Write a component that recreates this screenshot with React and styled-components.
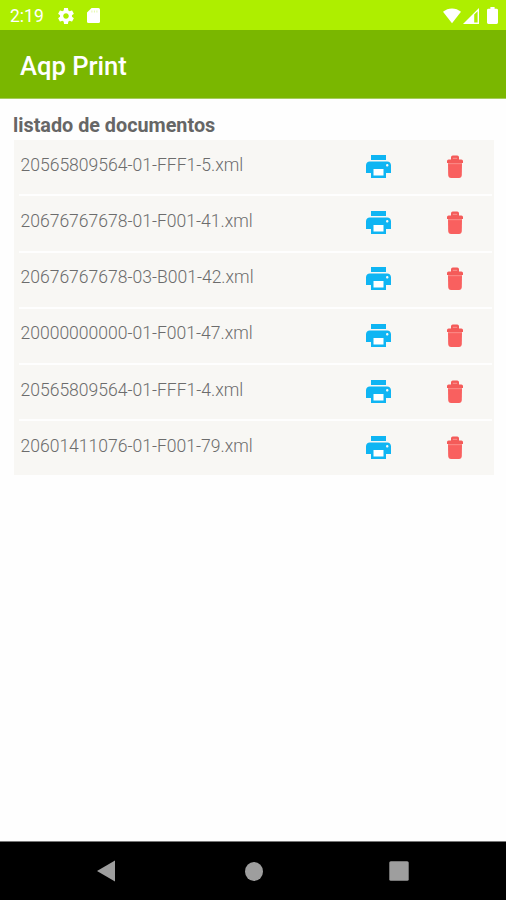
import React from 'react';
import styled, { createGlobalStyle } from 'styled-components';

const documents = [
  '20565809564-01-FFF1-5.xml',
  '20676767678-01-F001-41.xml',
  '20676767678-03-B001-42.xml',
  '20000000000-01-F001-47.xml',
  '20565809564-01-FFF1-4.xml',
  '20601411076-01-F001-79.xml',
];

const GearIcon = () => (
  <svg width="16" height="16" viewBox="2 2 20 20" fill="currentColor">
    <path d="M19.43 12.98c.04-.32.07-.64.07-.98s-.03-.66-.07-.98l2.11-1.65c.19-.15.24-.42.12-.64l-2-3.46c-.12-.22-.39-.3-.61-.22l-2.49 1c-.52-.4-1.08-.73-1.69-.98l-.38-2.65C14.46 2.18 14.25 2 14 2h-4c-.25 0-.46.18-.49.42l-.38 2.65c-.61.25-1.17.59-1.69.98l-2.49-1c-.23-.09-.49 0-.61.22l-2 3.46c-.13.22-.07.49.12.64l2.11 1.65c-.04.32-.07.65-.07.98s.03.66.07.98l-2.11 1.65c-.19.15-.24.42-.12.64l2 3.46c.12.22.39.3.61.22l2.49-1c.52.4 1.08.73 1.69.98l.38 2.65c.03.24.24.42.49.42h4c.25 0 .46-.18.49-.42l.38-2.65c.61-.25 1.17-.59 1.69-.98l2.49 1c.23.09.49 0 .61-.22l2-3.46c.12-.22.07-.49-.12-.64l-2.11-1.65zM12 15.5c-1.93 0-3.5-1.57-3.5-3.5s1.57-3.5 3.5-3.5 3.5 1.57 3.5 3.5-1.57 3.5-3.5 3.5z" />
  </svg>
);

const CardIcon = () => (
  <svg width="13" height="15" viewBox="0 0 13 15" fill="currentColor">
    <path d="M4.6 0H11.5Q13 0 13 1.5V13.5Q13 15 11.5 15H1.5Q0 15 0 13.5V4.6Z" />
    <path fill="#aeee00" opacity=".35" d="M4.4 2.4H5.4V4.6H4.4ZM6.9 2.4H7.9V4.6H6.9ZM9.4 2.4H10.4V4.6H9.4Z" />
  </svg>
);

const WifiIcon = () => (
  <svg width="18" height="16" viewBox="0 0 19 16" fill="currentColor">
    <path d="M0 3.6C5.4-1.2 13.6-1.2 19 3.6L9.5 15.6Z" />
  </svg>
);

const SignalIcon = () => (
  <svg width="16" height="16" viewBox="0 0 16 16" fill="currentColor">
    <path d="M0 16L16 0V16ZM11.2 6.6V14.6H14.6V3.2Z" fillRule="evenodd" />
  </svg>
);

const BatteryIcon = () => (
  <svg width="11" height="17" viewBox="0 0 11 17" fill="currentColor">
    <path d="M3.4 0H7.6V1.8H9.6Q11 1.8 11 3.2V15.6Q11 17 9.6 17H1.4Q0 17 0 15.6V3.2Q0 1.8 1.4 1.8H3.4Z" />
  </svg>
);

const PrintIcon = () => (
  <svg width="25" height="23" viewBox="2 3 20 18" preserveAspectRatio="none">
    <path fill="#fff" d="M7 13h10v7H7z" />
    <path
      fill="#0fb5f3"
      d="M19 8H5c-1.66 0-3 1.34-3 3v6h4v4h12v-4h4v-6c0-1.66-1.34-3-3-3zm-3 11H8v-5h8v5zm3-7c-.55 0-1-.45-1-1s.45-1 1-1 1 .45 1 1-.45 1-1 1zm-1-9H6v4h12V3z"
    />
  </svg>
);

const TrashIcon = () => (
  <svg width="16" height="23" viewBox="0 0 16 23">
    <path fill="#f9605f" d="M1 8.4H15L14.8 20Q14.6 23 12 23H4Q1.4 23 1.2 20Z" />
    <path fill="#fb8582" d="M1 7.8H15V9.2H1Z" />
    <path
      fill="#f45b59"
      d="M4 4.4V2.2Q4 .4 5.8 .4H10.2Q12 .4 12 2.2V4.4H14.4Q16 4.4 16 6V8H0V6Q0 4.4 1.6 4.4Z"
    />
    <path fill="#fa8f8c" d="M5.8 2.8H10.2V3.9H5.8Z" />
  </svg>
);

const App = () => {
  return (
    <Screen>
      <GlobalStyle />
      <StatusBar>
        <Clock>2:19</Clock>
        <Notifications>
          <GearIcon />
          <CardIcon />
        </Notifications>
        <Indicators>
          <WifiIcon />
          <SignalIcon />
          <BatteryIcon />
        </Indicators>
      </StatusBar>
      <AppBar>
        <Title>Aqp Print</Title>
      </AppBar>
      <Content>
        <Heading>listado de documentos</Heading>
        <List>
          {documents.map((name) => (
            <Row key={name}>
              <FileName>{name}</FileName>
              <IconButton $width="79px" aria-label="Imprimir">
                <PrintIcon />
              </IconButton>
              <IconButton $width="74px" aria-label="Eliminar">
                <TrashIcon />
              </IconButton>
            </Row>
          ))}
        </List>
      </Content>
      <NavBar>
        <svg width="18" height="22" viewBox="0 0 18 22">
          <path d="M0 11L18 .5V21.5Z" />
        </svg>
        <HomeIcon width="18" height="19" viewBox="0 0 18 19">
          <ellipse cx="9" cy="9.5" rx="9" ry="9.5" />
        </HomeIcon>
        <svg width="20" height="20" viewBox="0 0 20 20">
          <rect x=".3" y=".3" width="19.4" height="19.4" rx="1.5" />
        </svg>
      </NavBar>
    </Screen>
  );
};

const GlobalStyle = createGlobalStyle`
  * {
    box-sizing: border-box;
  }

  body {
    margin: 0;
    background-color: #fff;
    font-family: Roboto, sans-serif;
  }
`;

const Screen = styled.div`
  display: flex;
  flex-direction: column;
  width: 506px;
  height: 900px;
  background-color: #fefefe;
`;

const StatusBar = styled.div`
  display: flex;
  align-items: center;
  height: 30px;
  padding: 1px 8px 0 10px;
  background-color: #aeee00;
  color: #fff;
`;

const Clock = styled.span`
  width: 48px;
  font-size: 17.5px;
  line-height: 20px;
`;

const Notifications = styled.div`
  display: flex;
  align-items: center;
  gap: 13px;
`;

const Indicators = styled.div`
  display: flex;
  align-items: center;
  margin-left: auto;

  & svg:nth-child(2) {
    margin: 0 8px 0 2px;
  }
`;

const AppBar = styled.header`
  display: flex;
  align-items: center;
  height: 69px;
  padding: 3px 20px 0;
  border-bottom: 1px solid #a5cc5c;
  background-color: #7ab700;
`;

const Title = styled.h1`
  margin: 0;
  color: #fff;
  font-size: 25.6px;
  font-weight: 500;
`;

const Content = styled.main`
  flex: 1;
  padding: 15px 12px 0 14px;
`;

const Heading = styled.h2`
  margin: 0 0 0 -1px;
  height: 26px;
  color: #666;
  font-size: 19.8px;
  font-weight: 700;
  line-height: 23px;
`;

const List = styled.div`
  padding: 0 2px 0 5px;
  background-color: #f8f7f4;
`;

const Row = styled.div`
  display: flex;
  align-items: center;
  height: 56.25px;
  padding-left: 1.5px;
  border-bottom: 2px solid #fefefe;

  &:last-child {
    height: 53.4px;
    border-bottom: none;
  }
`;

const FileName = styled.span`
  flex: 1;
  margin-top: -4.8px;
  color: #6c6c6c;
  font-size: 17.55px;
  font-weight: 300;
  line-height: 22px;
`;

const IconButton = styled.button`
  display: flex;
  align-items: center;
  justify-content: center;
  width: ${(props) => props.$width};
  height: 53px;
  padding: 0 0 1.5px;
  border: none;
  background: none;
`;

const HomeIcon = styled.svg`
  margin-left: 3px;
`;

const NavBar = styled.nav`
  display: flex;
  align-items: center;
  justify-content: space-between;
  height: 59px;
  padding: 0 97px;
  border-top: 1px solid #777;
  background-color: #000;
  fill: #9e9e9e;
`;

export default App;
